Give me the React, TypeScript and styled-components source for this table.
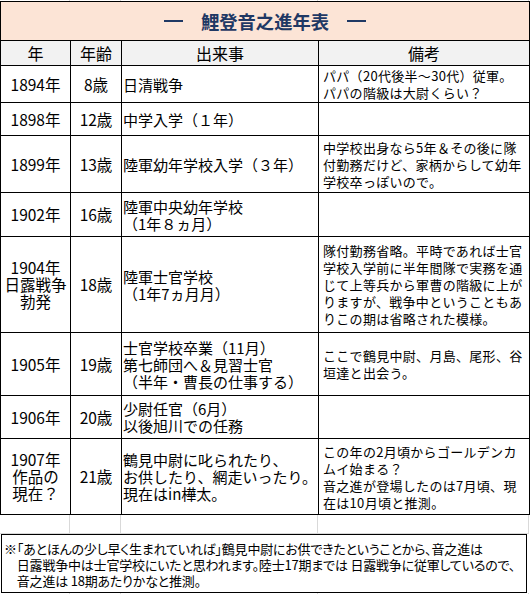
import React from "react";
import styled, { createGlobalStyle } from "styled-components";

const Global = createGlobalStyle`
  html, body { margin: 0; padding: 0; background: #ffffff; }
  body { font-family: "Noto Sans CJK JP", "Noto Sans", sans-serif; color: #000; }
`;

const COLS = [70, 51, 197, 211];

const Sheet = styled.div`
  width: 531px;
  height: 594px;
  overflow: hidden;
  background: #fff;
`;

const GridStrip = styled.div<{ $h: number }>`
  display: grid;
  grid-template-columns: 70px 51px 197px 211px;
  height: ${(p) => p.$h}px;
`;

const GridCell = styled.div<{ $bottom?: boolean }>`
  border-right: 1px solid #d9d9d9;
  ${(p) => (p.$bottom ? "border-bottom: 1px solid #d9d9d9;" : "")}
  box-sizing: border-box;
`;

const Table = styled.table`
  border-collapse: collapse;
  table-layout: fixed;
  width: 529px;
  margin-left: 0;
`;

const TitleCell = styled.th`
  background: #fce4d6;
  border: 1px solid #000;
  height: 38px;
  padding: 0;
`;

const TitleInner = styled.div`
  display: flex;
  justify-content: center;
  align-items: center;
  gap: 18px;
  color: #1f3864;
`;

const Dash = styled.span`
  display: inline-block;
  width: 19px;
  height: 1.5px;
  background: #1f3864;
`;

const TitleText = styled.span`
  font-size: 18.3px;
  font-weight: 700;
  line-height: 24px;
`;

const HeadCell = styled.th`
  background: #f2f2f2;
  border: 1px solid #000;
  font-weight: 400;
  font-size: 16px;
  height: 24px;
  padding: 0;
  line-height: 20px;
`;

const Row = styled.tr<{ $h: number }>`
  height: ${(p) => p.$h}px;
`;

const Cell = styled.td<{ $kind: "year" | "age" | "event" | "note" }>`
  border: 1px solid #000;
  vertical-align: middle;
  white-space: nowrap;
  overflow: hidden;
  padding: ${(p) =>
    p.$kind === "event" ? "0 0 0 1px" : p.$kind === "note" ? "0 0 0 4px" : "0"};
  text-align: ${(p) => (p.$kind === "year" || p.$kind === "age" ? "center" : "left")};
  font-size: ${(p) =>
    p.$kind === "note" ? "13px" : p.$kind === "event" ? "15px" : "15.5px"};
  letter-spacing: ${(p) => (p.$kind === "note" ? "0.3px" : "0")};
  line-height: 17px;
`;

const NoteBox = styled.div`
  width: 526px;
  height: 59px;
  box-sizing: border-box;
  border: 1px solid #000;
  margin-left: 1px;
  padding: 6px 0 0 2px;
  font-size: 13px;
  line-height: 16px;
  white-space: nowrap;
  font-feature-settings: "palt";
  letter-spacing: -0.2px;
`;

type RowData = {
  h: number;
  year: string[];
  age: string;
  event: string[];
  note: string[];
};

const rows: RowData[] = [
  { h: 37, year: ["1894年"], age: "8歳", event: ["日清戦争"], note: ["パパ（20代後半～30代）従軍。", "パパの階級は大尉くらい？"] },
  { h: 33, year: ["1898年"], age: "12歳", event: ["中学入学（１年）"], note: [] },
  { h: 57, year: ["1899年"], age: "13歳", event: ["陸軍幼年学校入学（３年）"], note: ["中学校出身なら5年＆その後に隊", "付勤務だけど、家柄からして幼年", "学校卒っぽいので。"] },
  { h: 44, year: ["1902年"], age: "16歳", event: ["陸軍中央幼年学校", "（1年８ヵ月）"], note: [] },
  { h: 96, year: ["1904年", "日露戦争", "勃発"], age: "18歳", event: ["陸軍士官学校", "（1年7ヵ月月）"], note: ["隊付勤務省略。平時であれば士官", "学校入学前に半年間隊で実務を通", "じて上等兵から軍曹の階級に上が", "りますが、戦争中ということもあ", "りこの期は省略された模様。"] },
  { h: 63, year: ["1905年"], age: "19歳", event: ["士官学校卒業（11月）", "第七師団へ＆見習士官", "（半年・曹長の仕事する）"], note: ["ここで鶴見中尉、月島、尾形、谷", "垣達と出会う。"] },
  { h: 43, year: ["1906年"], age: "20歳", event: ["少尉任官（6月）", "以後旭川での任務"], note: [] },
  { h: 76, year: ["1907年", "作品の", "現在？"], age: "21歳", event: ["鶴見中尉に叱られたり、", "お供したり、網走いったり。", "現在はin樺太。"], note: ["この年の2月頃からゴールデンカ", "ムイ始まる？", "音之進が登場したのは7月頃、現", "在は10月頃と推測。"] },
];

const noteLines = [
  "※「あとほんの少し早く生まれていれば」鶴見中尉にお供できたということから、音之進は",
  "\u3000日露戦争中は士官学校にいたと思われます。陸士17期までは 日露戦争に従軍しているので、",
  "\u3000音之進は 18期あたりかなと推測。",
];

const Lines: React.FC<{ lines: string[] }> = ({ lines }) => (
  <>
    {lines.map((l, i) => (
      <React.Fragment key={i}>
        {i > 0 && <br />}
        {l}
      </React.Fragment>
    ))}
  </>
);

const Grid: React.FC<{ h: number; bottom?: boolean }> = ({ h, bottom }) => (
  <GridStrip $h={h}>
    {COLS.map((_, i) => (
      <GridCell key={i} $bottom={bottom} />
    ))}
  </GridStrip>
);

export default function App() {
  return (
    <>
      <Global />
      <Sheet>
        <Grid h={1} />
        <Table>
          <colgroup>
            {COLS.map((w, i) => (
              <col key={i} style={{ width: w }} />
            ))}
          </colgroup>
          <thead>
            <tr>
              <TitleCell colSpan={4}>
                <TitleInner>
                  <Dash />
                  <TitleText>鯉登音之進年表</TitleText>
                  <Dash />
                </TitleInner>
              </TitleCell>
            </tr>
            <tr>
              <HeadCell>年</HeadCell>
              <HeadCell>年齢</HeadCell>
              <HeadCell>出来事</HeadCell>
              <HeadCell>備考</HeadCell>
            </tr>
          </thead>
          <tbody>
            {rows.map((r, i) => (
              <Row key={i} $h={r.h}>
                <Cell $kind="year"><Lines lines={r.year} /></Cell>
                <Cell $kind="age">{r.age}</Cell>
                <Cell $kind="event"><Lines lines={r.event} /></Cell>
                <Cell $kind="note"><Lines lines={r.note} /></Cell>
              </Row>
            ))}
          </tbody>
        </Table>
        <Grid h={19} bottom />
        <NoteBox>
          <Lines lines={noteLines} />
        </NoteBox>
        <Grid h={3} />
      </Sheet>
    </>
  );
}
